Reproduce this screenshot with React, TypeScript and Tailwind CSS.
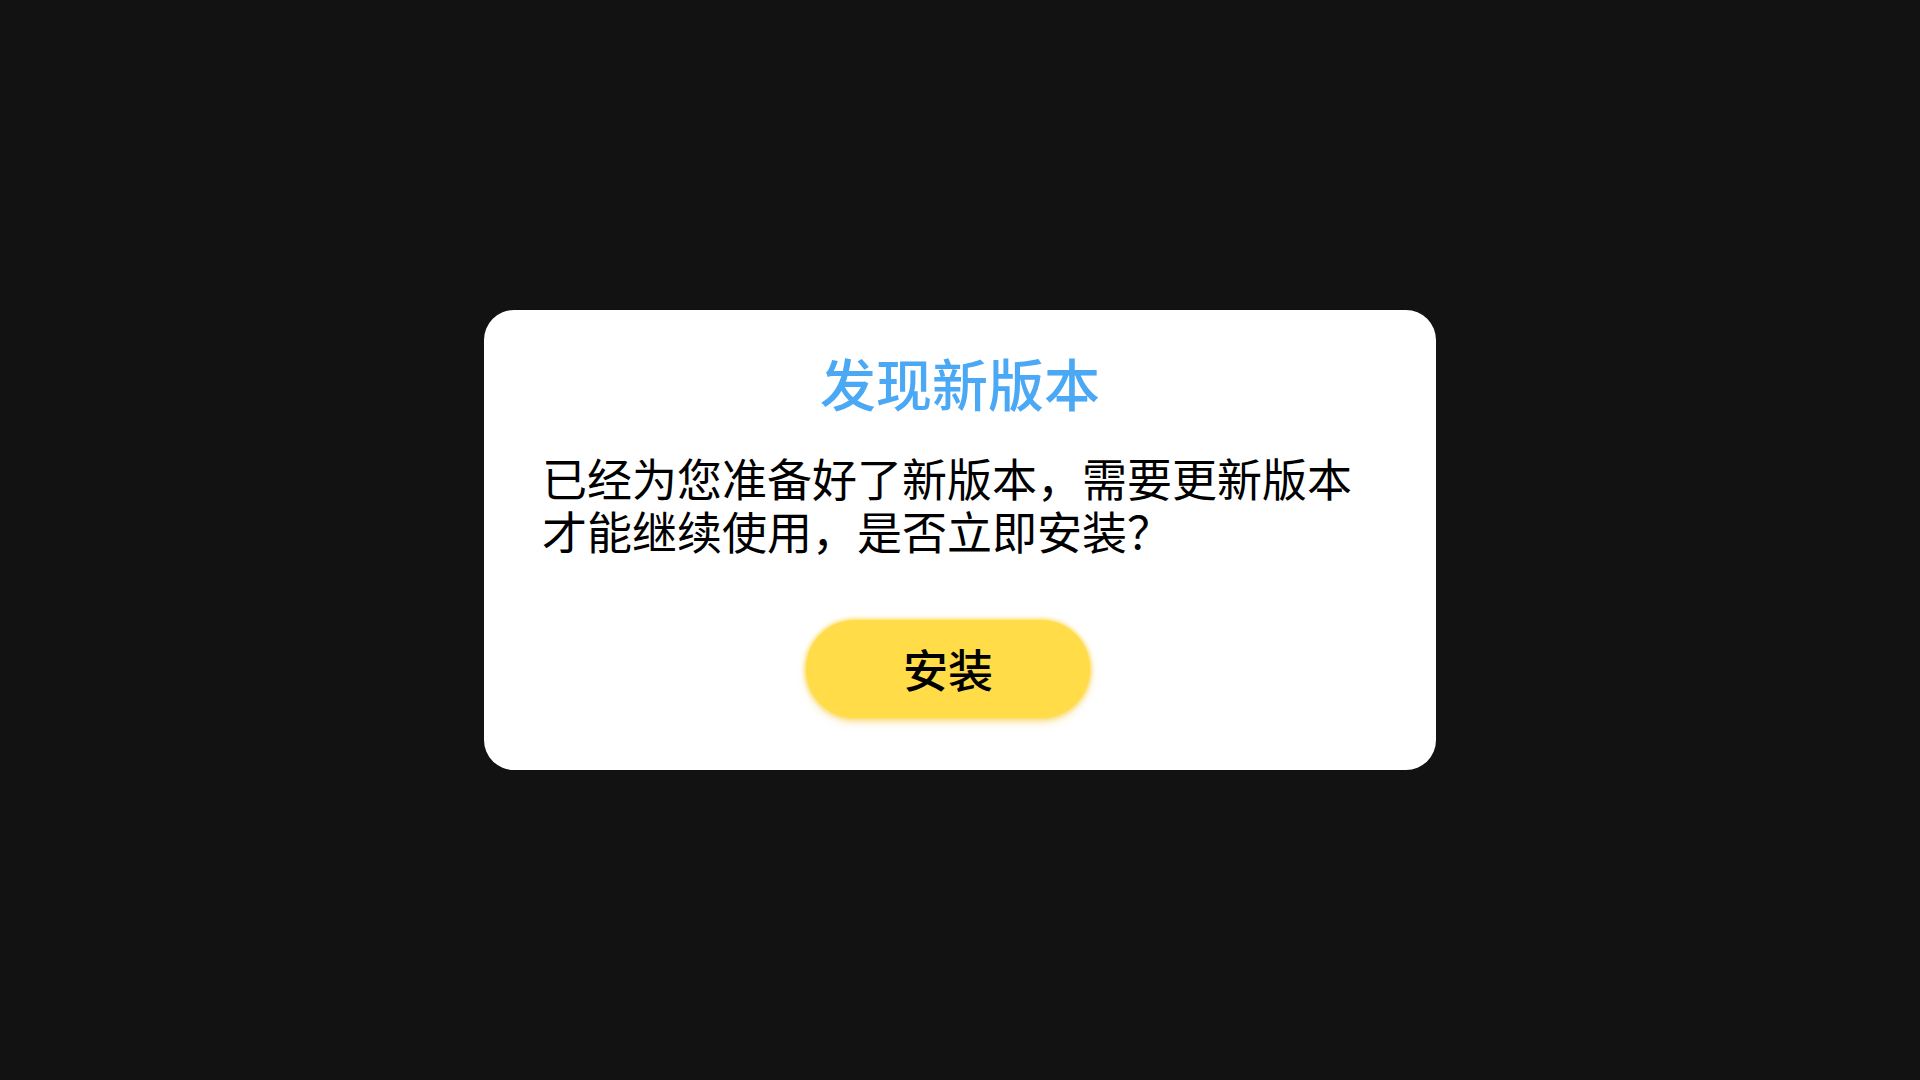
export default function App() {
  return (
    <div
      className="w-full h-screen bg-[#121212] flex items-center justify-center"
      style={{ fontFamily: '"Noto Sans CJK SC", "Noto Sans", sans-serif' }}
    >
      <div className="w-[952px] h-[460px] bg-white rounded-[30px] flex flex-col pt-[38px] px-[58px]">
        {/* Title */}
        <h1 className="text-center text-[56px] leading-[67px] font-medium text-[#4aa8f4]">
          发现新版本
        </h1>

        {/* Message */}
        <p className="mt-[36px] text-[45px] leading-[53px] text-black">
          已经为您准备好了新版本，需要更新版本
          <br />
          才能继续使用，是否立即安装？
        </p>

        {/* Install button */}
        <button
          className="mt-[63px] ml-[264px] w-[284px] h-[98px] rounded-full bg-[#ffdc48] text-[45px] font-medium text-black shadow-[0_0_4px_1px_rgba(255,215,60,0.9),0_4px_8px_rgba(235,175,0,0.35)]"
        >
          安装
        </button>
      </div>
    </div>
  );
}
